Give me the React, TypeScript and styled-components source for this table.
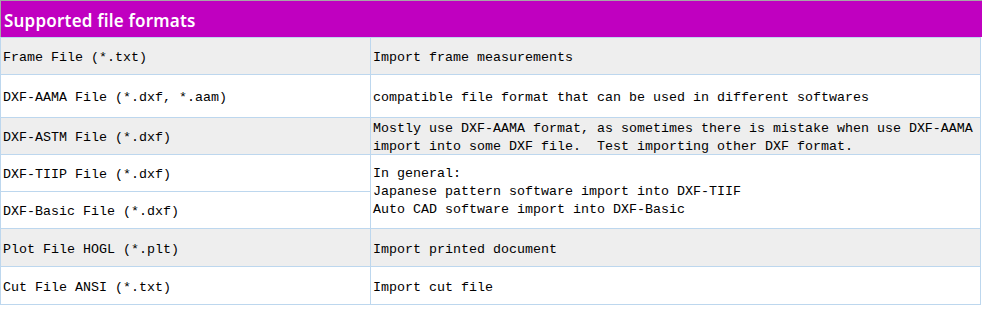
import React from "react";
import styled, { createGlobalStyle } from "styled-components";

const GlobalStyle = createGlobalStyle`
  html, body {
    margin: 0;
    padding: 0;
    background: #ffffff;
  }
`;

const Layout = styled.div`
  width: 982px;
  display: flex;
  flex-direction: column;
`;

const Header = styled.div`
  height: 34px;
  width: 980px;
  border: 1px solid #a6a6a6;
  border-bottom: none;
  background-color: #c000c0;
  display: flex;
  align-items: center;
  padding: 2px 0 0 3px;
  box-sizing: content-box;
  color: #ffffff;
  font-family: "Noto Sans", sans-serif;
  font-weight: 600;
  font-size: 17px;
  letter-spacing: 0.2px;
`;

const Grid = styled.div`
  width: 979px;
  display: grid;
  grid-template-columns: 369px 609px;
  grid-template-rows: 36px 42px 36px 36px 36px 37px 37px;
  gap: 1px;
  padding: 1px;
  background-color: #bdd7ee;
`;

const Cell = styled.div<{ $shade?: boolean; $span?: number }>`
  background-color: ${(p) => (p.$shade ? "#eeeeee" : "#ffffff")};
  grid-row: ${(p) => (p.$span ? `span ${p.$span}` : "auto")};
  display: flex;
  flex-direction: column;
  justify-content: center;
  padding: ${(p) => (p.$span ? "0 2px" : "4px 2px 0 2px")};
  font-family: "Liberation Mono", monospace;
  font-size: 13.33px;
  line-height: 18px;
  color: #000000;
  white-space: nowrap;
`;

const rows = [
  { name: "Frame File (*.txt)", desc: ["Import frame measurements"], shade: true },
  { name: "DXF-AAMA File (*.dxf, *.aam)", desc: ["compatible file format that can be used in different softwares"] },
  {
    name: "DXF-ASTM File (*.dxf)",
    desc: [
      "Mostly use DXF-AAMA format, as sometimes there is mistake when use DXF-AAMA",
      "import into some DXF file.  Test importing other DXF format.",
    ],
    shade: true,
  },
  {
    name: "DXF-TIIP File (*.dxf)",
    desc: [
      "In general:",
      "Japanese pattern software import into DXF-TIIF",
      "Auto CAD software import into DXF-Basic",
    ],
    span: 2,
  },
  { name: "DXF-Basic File (*.dxf)" },
  { name: "Plot File HOGL (*.plt)", desc: ["Import printed document"], shade: true },
  { name: "Cut File ANSI (*.txt)", desc: ["Import cut file"] },
];

export default function App() {
  return (
    <Layout>
      <GlobalStyle />
      <Header>Supported file formats</Header>
      <Grid>
        {rows.map((row) => (
          <React.Fragment key={row.name}>
            <Cell $shade={row.shade}>{row.name}</Cell>
            {row.desc && (
              <Cell $shade={row.shade} $span={row.span}>
                {row.desc.map((line) => (
                  <div key={line}>{line.replace(/  /g, "\u00a0 ")}</div>
                ))}
              </Cell>
            )}
          </React.Fragment>
        ))}
      </Grid>
    </Layout>
  );
}
